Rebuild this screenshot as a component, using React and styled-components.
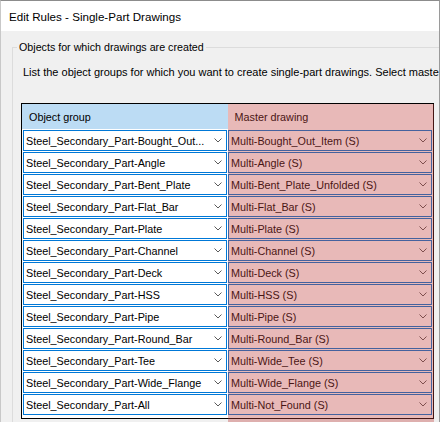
import React from "react";
import styled, { createGlobalStyle } from "styled-components";

const GlobalStyle = createGlobalStyle`
  html, body {
    margin: 0;
    padding: 0;
  }
  body {
    width: 440px;
    height: 422px;
    overflow: hidden;
    background: #f0f0f0;
    font-family: "Liberation Sans", Arial, sans-serif;
    color: #000;
  }
`;

const Window = styled.div`
  width: 440px;
  height: 422px;
  box-sizing: border-box;
  border-top: 1px solid #8c8c8c;
  border-right: 1px solid #9a9a9a;
  border-left: 1px solid #c8c8c8;
  display: flex;
  flex-direction: column;
  overflow: hidden;
`;

const TitleBar = styled.div`
  height: 30px;
  flex: none;
  background: #fff;
  display: flex;
  align-items: center;
  padding-left: 8px;
  font-size: 11.6px;
`;

const Body = styled.div`
  flex: 1;
  background: #f0f0f0;
  padding: 8px 0 0 11px;
  overflow: hidden;
`;

const Group = styled.fieldset`
  margin: 0 -40px 0 0;
  padding: 0 0 0 10px;
  min-width: 0;
  height: 100%;
  box-sizing: border-box;
  border: 1px solid #dcdcdc;
  border-right: none;
  border-bottom: none;
`;

const Legend = styled.legend`
  margin-left: -6px;
  padding: 0 2px;
  font-size: 10.7px;
  line-height: 16px;
`;

const Description = styled.div`
  margin-top: 9px;
  width: 416px;
  font-size: 11px;
  line-height: 16px;
  white-space: nowrap;
  overflow: hidden;
`;

const Table = styled.div`
  position: relative;
  margin: 23px 0 0 -2px;
  width: 413px;
  box-sizing: border-box;
  border: 1px solid #000;
`;

const Columns = styled.div`
  display: grid;
  grid-template-columns: 205.5px 205.5px;
`;

const Header = styled(Columns)`
  height: 25px;
`;

const HeaderCell = styled.div`
  display: flex;
  align-items: center;
  padding-left: 7px;
  font-size: 10.8px;
  background: ${(p) => (p.$active ? "#bcdcf4" : "#fff")};
`;

const Rows = styled(Columns)`
  row-gap: 1px;
  padding: 1px 0 3px;
  background: #fff;
`;

const Combo = styled.div`
  height: 21px;
  box-sizing: border-box;
  margin: ${(p) => (p.$right ? "0 1px 0 0.5px" : "0 0.5px 0 1px")};
  border: 1px solid #0078d7;
  background: #fff;
  display: flex;
  align-items: center;
  padding: 0 4px 0 2px;
  font-size: 10.8px;
`;

const ComboText = styled.span`
  flex: 1;
  white-space: nowrap;
  overflow: hidden;
`;

const Highlight = styled.div`
  position: absolute;
  left: 205.5px;
  top: 0;
  right: -1px;
  bottom: -12px;
  background: rgba(190, 60, 58, 0.36);
  pointer-events: none;
`;

const Chevron = () => (
  <svg width="8" height="5" viewBox="0 0 8 5">
    <polyline points="0.5,0.5 4,4 7.5,0.5" fill="none" stroke="#5a5a5a" strokeWidth="1" />
  </svg>
);

const rules = [
  ["Steel_Secondary_Part-Bought_Out...", "Multi-Bought_Out_Item (S)"],
  ["Steel_Secondary_Part-Angle", "Multi-Angle (S)"],
  ["Steel_Secondary_Part-Bent_Plate", "Multi-Bent_Plate_Unfolded (S)"],
  ["Steel_Secondary_Part-Flat_Bar", "Multi-Flat_Bar (S)"],
  ["Steel_Secondary_Part-Plate", "Multi-Plate (S)"],
  ["Steel_Secondary_Part-Channel", "Multi-Channel (S)"],
  ["Steel_Secondary_Part-Deck", "Multi-Deck (S)"],
  ["Steel_Secondary_Part-HSS", "Multi-HSS (S)"],
  ["Steel_Secondary_Part-Pipe", "Multi-Pipe (S)"],
  ["Steel_Secondary_Part-Round_Bar", "Multi-Round_Bar (S)"],
  ["Steel_Secondary_Part-Tee", "Multi-Wide_Tee (S)"],
  ["Steel_Secondary_Part-Wide_Flange", "Multi-Wide_Flange (S)"],
  ["Steel_Secondary_Part-All", "Multi-Not_Found (S)"],
];

export default function App() {
  return (
    <>
      <GlobalStyle />
      <Window>
        <TitleBar>Edit Rules - Single-Part Drawings</TitleBar>
        <Body>
          <Group>
            <Legend>Objects for which drawings are created</Legend>
            <Description>
              List the object groups for which you want to create single-part drawings. Select maste
            </Description>
            <Table>
              <Header>
                <HeaderCell $active>Object group</HeaderCell>
                <HeaderCell>Master drawing</HeaderCell>
              </Header>
              <Rows>
                {rules.map(([group, master]) => (
                  <React.Fragment key={group}>
                    <Combo>
                      <ComboText>{group}</ComboText>
                      <Chevron />
                    </Combo>
                    <Combo $right>
                      <ComboText>{master}</ComboText>
                      <Chevron />
                    </Combo>
                  </React.Fragment>
                ))}
              </Rows>
              <Highlight />
            </Table>
          </Group>
        </Body>
      </Window>
    </>
  );
}
